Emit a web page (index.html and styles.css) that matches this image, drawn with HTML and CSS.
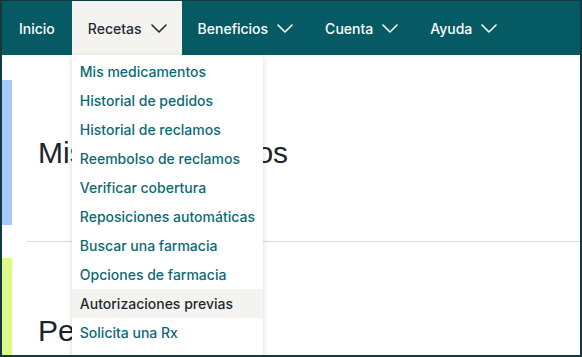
FILE: index.html
```html
<!DOCTYPE html>
<html lang="es">
<head>
<meta charset="utf-8">
<link rel="stylesheet" href="styles.css">
</head>
<body>
<div class="frame">
  <nav class="nav">
    <a class="nav-item">Inicio</a>
    <div class="nav-item has-menu active">
      <span>Recetas</span>
      <svg class="chev" viewBox="0 0 16 9" width="16" height="9"><path d="M1 1l7 7 7-7" fill="none" stroke="currentColor" stroke-width="1.6" stroke-linecap="round" stroke-linejoin="round"/></svg>
      <ul class="menu">
        <li>Mis medicamentos</li>
        <li>Historial de pedidos</li>
        <li>Historial de reclamos</li>
        <li>Reembolso de reclamos</li>
        <li>Verificar cobertura</li>
        <li>Reposiciones automáticas</li>
        <li>Buscar una farmacia</li>
        <li>Opciones de farmacia</li>
        <li class="hover">Autorizaciones previas</li>
        <li>Solicita una Rx</li>
      </ul>
    </div>
    <div class="nav-item has-menu">
      <span>Beneficios</span>
      <svg class="chev" viewBox="0 0 16 9" width="16" height="9"><path d="M1 1l7 7 7-7" fill="none" stroke="currentColor" stroke-width="1.6" stroke-linecap="round" stroke-linejoin="round"/></svg>
    </div>
    <div class="nav-item has-menu">
      <span>Cuenta</span>
      <svg class="chev" viewBox="0 0 16 9" width="16" height="9"><path d="M1 1l7 7 7-7" fill="none" stroke="currentColor" stroke-width="1.6" stroke-linecap="round" stroke-linejoin="round"/></svg>
    </div>
    <div class="nav-item has-menu">
      <span>Ayuda</span>
      <svg class="chev" viewBox="0 0 16 9" width="16" height="9"><path d="M1 1l7 7 7-7" fill="none" stroke="currentColor" stroke-width="1.6" stroke-linecap="round" stroke-linejoin="round"/></svg>
    </div>
  </nav>
  <main class="main">
    <section class="card">
      <div class="bar bar-blue"></div>
      <h2 class="title">Mis medicamentos</h2>
    </section>
    <hr class="divider">
    <section class="card">
      <div class="bar bar-green"></div>
      <h2 class="title">Pedidos</h2>
    </section>
  </main>
</div>
</body>
</html>
```

FILE: styles.css
```css
* { box-sizing: border-box; }
html, body { margin: 0; padding: 0; }
body {
  width: 582px;
  height: 357px;
  overflow: hidden;
  font-family: Inter, "Noto Sans", sans-serif;
  background: #fff;
}
.frame {
  width: 582px;
  height: 357px;
  border: 2px solid #15393c;
  border-top: 1px solid #0f3a3e;
  overflow: hidden;
  position: relative;
}
.nav {
  display: flex;
  height: 54px;
  background: #055a63;
  color: #ffffff;
  font-size: 14px;
  font-weight: 500;
  position: relative;
  z-index: 2;
}
.nav-item {
  display: flex;
  align-items: center;
  padding: 0 16px 0 16px;
  height: 100%;
  color: #fff;
  position: relative;
}
.nav-item:first-child { padding-left: 17px; padding-right: 17px; }
.chev { margin-left: 9px; margin-top: 1px; }
.active {
  background: #f5f3f0;
  color: #1e2a32;
  padding-right: 15px;
}
.menu {
  list-style: none;
  margin: 0;
  padding: 2px 0 40px;
  position: absolute;
  top: 54px;
  left: 0;
  width: 191px;
  background: #fff;
  box-shadow: 0 2px 6px rgba(0, 0, 0, 0.16);
}
.menu li {
  height: 29px;
  line-height: 29px;
  padding-left: 8px;
  font-size: 14px;
  font-weight: 500;
  color: #0b6a74;
  white-space: nowrap;
}
.menu li.hover {
  background: #f5f3f0;
  color: #1e2a32;
}
.main {
  padding-top: 25px;
}
.card {
  display: flex;
  align-items: center;
  height: 145px;
}
.bar {
  width: 10px;
  height: 100%;
  flex: none;
}
.bar-blue { background: #a6c8ff; }
.bar-green { background: #dcf98a; }
.title {
  margin: 0 0 0 26px;
  font-family: "Liberation Sans", Arial, sans-serif;
  font-weight: 400;
  font-size: 30px;
  color: #1c252d;
}
.divider {
  margin: 16px 0 16px 25px;
  border: 0;
  border-top: 1px solid #d9d9d9;
  height: 0;
}
```
